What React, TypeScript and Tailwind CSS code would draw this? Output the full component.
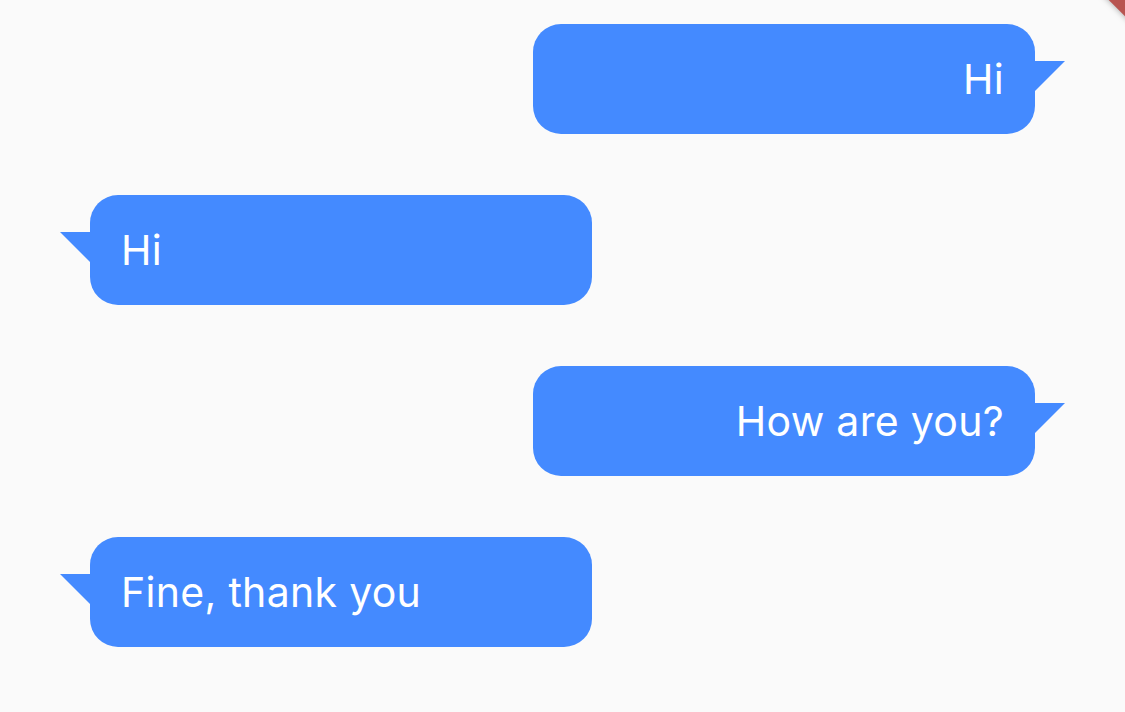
const messages = [
  { text: "Hi", mine: true },
  { text: "Hi", mine: false },
  { text: "How are you?", mine: true },
  { text: "Fine, thank you", mine: false },
];

const Bubble = ({ text, mine }: { text: string; mine: boolean }) => {
  return (
    <div className={mine ? "flex justify-end pr-[90px]" : "flex justify-start pl-[90px]"}>
      <div
        className={
          "relative flex h-[110px] w-[502px] items-center rounded-[28px] bg-[#448aff] px-[31px] " +
          (mine ? "justify-end" : "justify-start")
        }
      >
        {/* tail */}
        <svg
          width="30"
          height="30"
          viewBox="0 0 30 30"
          className={mine ? "absolute right-[-30px] top-[37px]" : "absolute left-[-30px] top-[37px]"}
        >
          {mine ? (
            <polygon points="0,0 30,0 0,30" fill="#448aff" />
          ) : (
            <polygon points="0,0 30,0 30,30" fill="#448aff" />
          )}
        </svg>
        <span className="text-[41px] leading-none text-white [font-family:Inter,'Noto_Sans',sans-serif] tracking-[0.3px]">
          {text}
        </span>
      </div>
    </div>
  );
};

export default function App() {
  return (
    <div className="relative h-[712px] w-[1125px] overflow-hidden bg-[#fafafa]">
      <div className="flex flex-col gap-[61px] pt-[24px]">
        {messages.map((m, i) => (
          <Bubble key={i} text={m.text} mine={m.mine} />
        ))}
      </div>
      {/* debug banner corner */}
      <div className="absolute right-[-60px] top-[-52px] h-[40px] w-[160px] rotate-45 bg-[#b85450] shadow-[0_0_6px_rgba(0,0,0,0.35)]" />
    </div>
  );
}
